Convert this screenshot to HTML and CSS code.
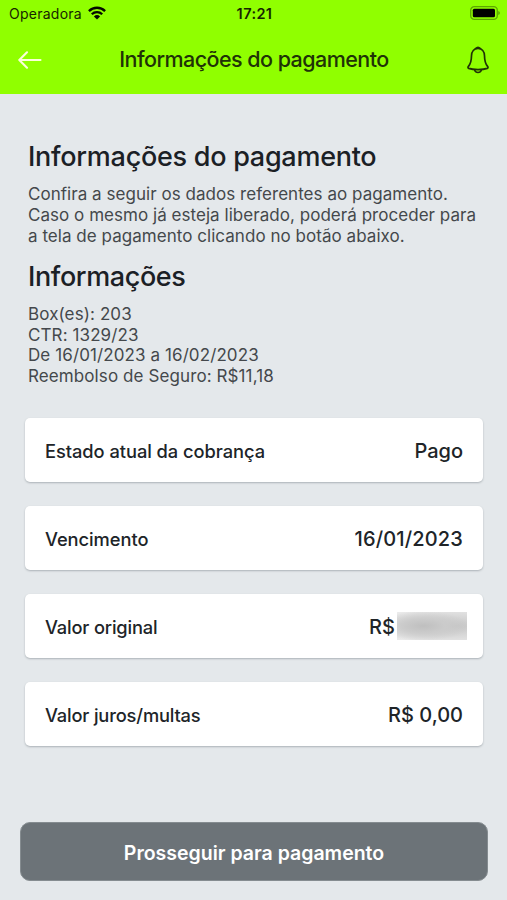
FILE: index.html
```html
<!DOCTYPE html>
<html lang="pt-BR">
<head>
<meta charset="utf-8">
<meta name="viewport" content="width=device-width, initial-scale=1">
<title>Informações do pagamento</title>
<link rel="stylesheet" href="styles.css">
</head>
<body>
<header class="top">
  <div class="status">
    <div class="carrier"><span>Operadora</span>
      <svg class="wifi" width="18" height="14" viewBox="0 0 18 14" fill="none" stroke="#050a00" stroke-width="2.3">
        <path d="M.9 5.1a11.5 11.5 0 0 1 16.2 0"/><path d="M3.8 8.2a7.4 7.4 0 0 1 10.4 0"/>
        <path d="M9 13.5 5.9 10.4a4.5 4.5 0 0 1 6.2 0Z" fill="#050a00" stroke="none"/>
      </svg>
    </div>
    <time class="clock">17:21</time>
    <svg class="battery" width="30" height="14" viewBox="0 0 30 14">
      <rect x=".7" y=".7" width="26.6" height="12.6" rx="3.6" fill="none" stroke="#000" stroke-opacity=".35" stroke-width="1.3"/>
      <rect x="2.8" y="2.7" width="22.2" height="8.6" rx="1.5"/>
      <path d="M28.3 5v4q1.5-.6 1.5-2t-1.5-2" opacity=".4"/>
    </svg>
  </div>
  <nav class="bar">
    <svg class="back" width="24" height="18" viewBox="0 0 24 18" fill="none" stroke="#fbffd9" stroke-width="2.1" stroke-linecap="round" stroke-linejoin="round"><path d="M22.5 9H1.5M9 1.3 1.3 9 9 16.700"/></svg>
    <h1 class="title">Informações do pagamento</h1>
    <svg class="bell" width="24" height="28" viewBox="0 0 24 28" fill="none" stroke="#203207" stroke-width="1.7" stroke-linejoin="round">
      <path d="M12 2.4C8 2.4 5.6 5.500 5.500 9.800c-.1 6.500-1 8.100-2.900 10.300-.9 1.100-.8 1.900.1 2.300 4.500 1.600 14.100 1.600 18.600 0 .9-.4 1-1.200.1-2.300-1.900-2.200-2.800-3.800-2.900-10.300C18.400 5.500 16 2.400 12 2.400Z"/>
      <path d="M9.700 2.700Q12 .2 14.300 2.700M8.500 24q1 2.500 3.500 2.500t3.500-2.500"/>
    </svg>
  </nav>
</header>
<main class="content">
  <section class="intro">
    <h2 class="heading">Informações do pagamento</h2>
    <p class="copy">Confira a seguir os dados referentes ao pagamento.<br>Caso o mesmo já esteja liberado, poderá proceder para<br>a tela de pagamento clicando no botão abaixo.</p>
    <h2 class="heading second">Informações</h2>
    <p class="copy details">Box(es): 203<br>CTR: 1329/23<br>De 16/01/2023 a 16/02/2023<br>Reembolso de Seguro: R$11,18</p>
  </section>
  <dl class="cards">
    <div class="card"><dt>Estado atual da cobrança</dt><dd>Pago</dd></div>
    <div class="card"><dt>Vencimento</dt><dd class="date">16/01/2023</dd></div>
    <div class="card"><dt class="tight">Valor original</dt><dd class="masked">R$<span class="mask"></span></dd></div>
    <div class="card"><dt class="tight">Valor juros/multas</dt><dd>R$ 0,00</dd></div>
  </dl>
  <button class="proceed" type="button">Prosseguir para pagamento</button>
</main>
</body>
</html>
```
FILE: styles.css
```css
* { box-sizing: border-box; }
body { margin: 0; height: 900px; overflow: hidden; background: #e4e8eb; color: #202428; font-family: Inter, "Liberation Sans", sans-serif; }
h1, h2, p, dl, dd { margin: 0; }
.top { height: 94px; background: #90ff00; }
.status { height: 28px; padding: 0 7px 0 9px; display: grid; grid-template-columns: 1fr auto 1fr; align-items: center; color: #172500; }
.carrier { display: flex; align-items: center; gap: 6px; font-size: 14px; letter-spacing: .25px; }
.wifi { margin-top: -3px; }
.clock { margin-top: -1px; font-size: 14.5px; font-weight: 600; letter-spacing: .4px; }
.carrier span { margin-top: -1px; }
.battery { justify-self: end; margin-top: -2px; }
.bar { height: 64px; padding: 0 17px 0 18px; display: grid; grid-template-columns: 1fr auto 1fr; align-items: center; }
.title { margin-top: -2px; font-size: 21.5px; font-weight: 500; line-height: 26px; letter-spacing: -.55px; color: #203207; }
.bell { justify-self: end; }
.content { display: flex; flex-direction: column; }
.intro { padding: 46px 20px 0 28px; }
.heading { font-size: 27px; font-weight: 500; line-height: 34px; letter-spacing: -.27px; color: #1b2025; }
.second { margin-top: 13.5px; letter-spacing: -.4px; }
.copy { margin-top: 10px; font-size: 17px; line-height: 20.8px; letter-spacing: .04px; color: #44484c; white-space: nowrap; }
.details { letter-spacing: .1px; }
.cards { padding: 31.3px 24px 0 25px; display: grid; gap: 24px; }
.card { height: 64px; padding: 1px 20px 0; display: flex; align-items: center; justify-content: space-between; background: #fff; border-radius: 5px; box-shadow: 0 1px 2px rgba(30, 40, 50, .28); font-size: 18.3px; font-weight: 500; letter-spacing: -.05px; }
.card dt { padding-top: 1px; }
.card .tight { letter-spacing: -.17px; }
.card dd { font-size: 20px; letter-spacing: 0; }
.card .date { letter-spacing: .15px; }
.masked { display: flex; align-items: center; }
.mask { width: 70px; height: 28px; margin: -2px -4px 0 2px; background: radial-gradient(ellipse at 38% 50%, #bfbfbf 0%, #cbcbcb 35%, transparent 75%), radial-gradient(ellipse at 80% 50%, #c3c3c3 0%, #d5d5d5 40%, #ececec 100%); filter: blur(.7px); }
.proceed { height: 59px; margin: 76px 19px 0 20px; padding: 2px 0 0; border: 1px solid #858c90; border-radius: 10px; background: #6c7378; color: #fff; font: 600 19.5px/24px Inter, "Liberation Sans", sans-serif; }
```
